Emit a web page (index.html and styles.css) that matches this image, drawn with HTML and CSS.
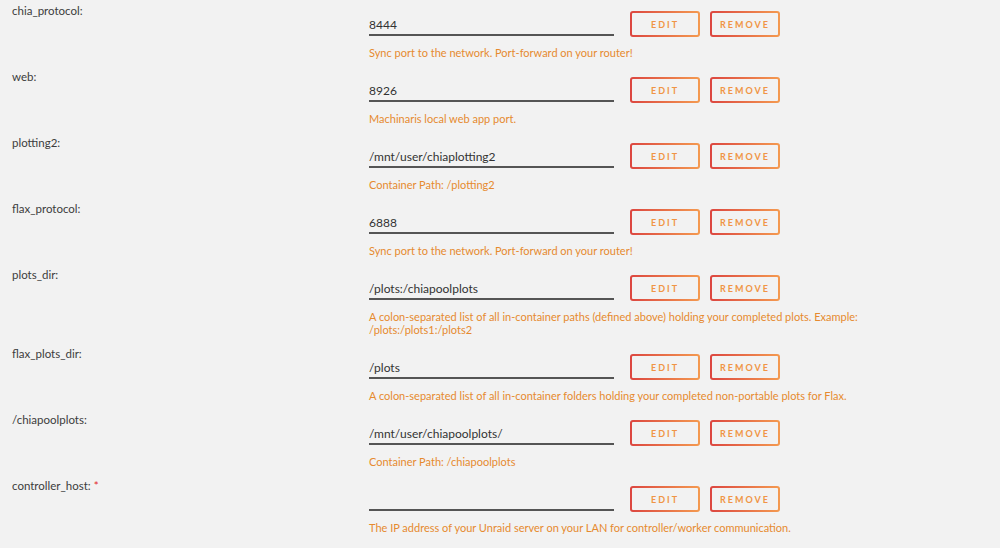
FILE: index.html
```html
<!DOCTYPE html>
<html lang="en">
  <head>
    <meta charset="UTF-8" />
    <meta name="viewport" content="width=device-width, initial-scale=1.0" />
    <title>Container Settings</title>
    <link rel="stylesheet" href="styles.css">
  </head>

  <body>
    <div class="settings">
      <div class="row">
        <div class="label">chia_protocol:</div>
        <div class="field">
          <div class="field-line">
            <input type="text" class="value-input" value="8444" />
            <button class="btn">Edit</button>
            <button class="btn">Remove</button>
          </div>
          <div class="desc">Sync port to the network. Port-forward on your router!</div>
        </div>
      </div>

      <div class="row">
        <div class="label">web:</div>
        <div class="field">
          <div class="field-line">
            <input type="text" class="value-input" value="8926" />
            <button class="btn">Edit</button>
            <button class="btn">Remove</button>
          </div>
          <div class="desc">Machinaris local web app port.</div>
        </div>
      </div>

      <div class="row">
        <div class="label">plotting2:</div>
        <div class="field">
          <div class="field-line">
            <input type="text" class="value-input" value="/mnt/user/chiaplotting2" />
            <button class="btn">Edit</button>
            <button class="btn">Remove</button>
          </div>
          <div class="desc">Container Path: /plotting2</div>
        </div>
      </div>

      <div class="row">
        <div class="label">flax_protocol:</div>
        <div class="field">
          <div class="field-line">
            <input type="text" class="value-input" value="6888" />
            <button class="btn">Edit</button>
            <button class="btn">Remove</button>
          </div>
          <div class="desc">Sync port to the network. Port-forward on your router!</div>
        </div>
      </div>

      <div class="row">
        <div class="label">plots_dir:</div>
        <div class="field">
          <div class="field-line">
            <input type="text" class="value-input" value="/plots:/chiapoolplots" />
            <button class="btn">Edit</button>
            <button class="btn">Remove</button>
          </div>
          <div class="desc">A colon-separated list of all in-container paths (defined above) holding your completed plots. Example:<br>/plots:/plots1:/plots2</div>
        </div>
      </div>

      <div class="row">
        <div class="label">flax_plots_dir:</div>
        <div class="field">
          <div class="field-line">
            <input type="text" class="value-input" value="/plots" />
            <button class="btn">Edit</button>
            <button class="btn">Remove</button>
          </div>
          <div class="desc">A colon-separated list of all in-container folders holding your completed non-portable plots for Flax.</div>
        </div>
      </div>

      <div class="row">
        <div class="label">/chiapoolplots:</div>
        <div class="field">
          <div class="field-line">
            <input type="text" class="value-input" value="/mnt/user/chiapoolplots/" />
            <button class="btn">Edit</button>
            <button class="btn">Remove</button>
          </div>
          <div class="desc">Container Path: /chiapoolplots</div>
        </div>
      </div>

      <div class="row">
        <div class="label">controller_host: <span class="required">*</span></div>
        <div class="field">
          <div class="field-line">
            <input type="text" class="value-input" value="" />
            <button class="btn">Edit</button>
            <button class="btn">Remove</button>
          </div>
          <div class="desc">The IP address of your Unraid server on your LAN for controller/worker communication.</div>
        </div>
      </div>
    </div>
  </body>
</html>
```

FILE: styles.css
```css
* {
  margin: 0;
  padding: 0;
  box-sizing: border-box;
}

body {
  font-family: Lato, "Open Sans", Arial, sans-serif;
  background-color: #f2f2f2;
  color: #333;
  font-size: 12px;
}

.settings {
  padding-left: 12px;
}

.row {
  display: grid;
  grid-template-columns: 357px 1fr;
  padding: 4px 0 7px;
}

.label {
  font-size: 11.5px;
  line-height: 14px;
  color: #3c3c3c;
}

.required {
  color: #e22828;
}

.field-line {
  display: flex;
  align-items: flex-start;
  margin-top: 7px;
  height: 26px;
}

.value-input {
  width: 245px;
  height: 25px;
  padding-top: 3px;
  border: none;
  border-bottom: 2px solid #555;
  background: transparent;
  font-family: inherit;
  font-size: 12px;
  color: #333;
  outline: none;
  margin-right: 16px;
}

.btn {
  width: 70px;
  height: 26px;
  margin-right: 10px;
  border: 2px solid transparent;
  border-radius: 3px;
  background:
    linear-gradient(#f2f2f2, #f2f2f2) padding-box,
    linear-gradient(90deg, #dc4640, #f49a50) border-box;
  color: #f09545;
  font-family: inherit;
  font-size: 9px;
  font-weight: bold;
  letter-spacing: 2px;
  text-transform: uppercase;
  cursor: pointer;
}

.desc {
  margin-top: 9px;
  font-size: 11px;
  line-height: 13px;
  color: #e68a2f;
}
```
